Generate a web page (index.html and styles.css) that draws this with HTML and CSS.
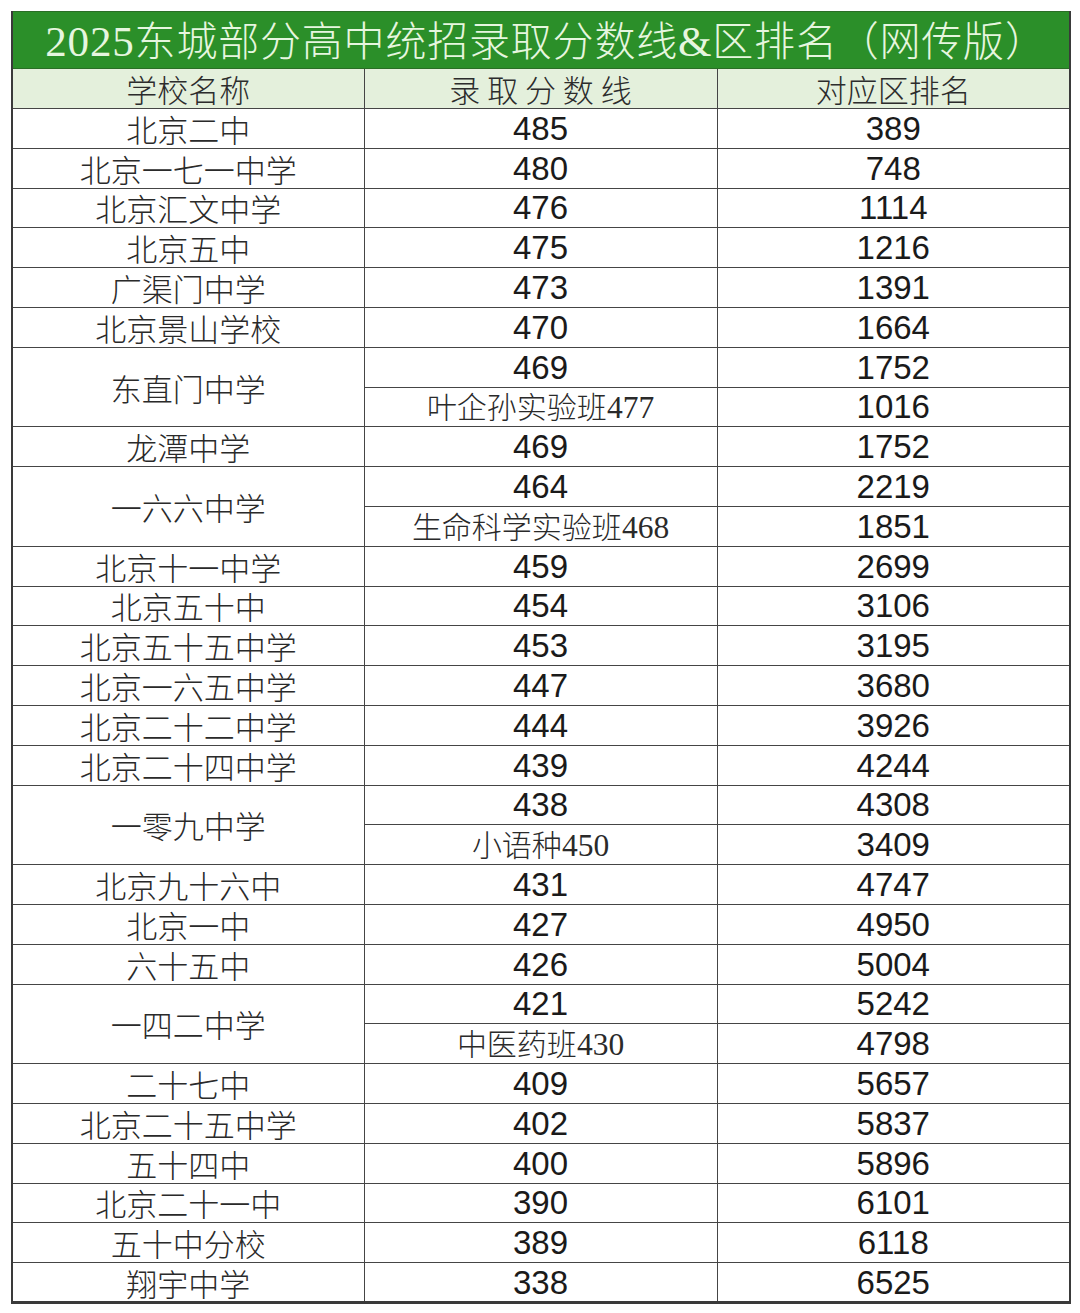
FILE: index.html
```html
<!DOCTYPE html>
<html lang="zh-CN">
<head>
<meta charset="utf-8">
<title>2025东城部分高中统招录取分数线&区排名</title>
<link rel="stylesheet" href="styles.css">
</head>
<body>
<div class="sheet">
<table class="scores">
<colgroup><col class="c1"><col class="c2"><col class="c3"></colgroup>
<thead>
<tr class="title-row"><th colspan="3" class="title"><span class="d">2025</span>东城部分高中统招录取分数线<span class="d">&amp;</span>区排名（网传版）</th></tr>
<tr class="head-row"><th class="hd">学校名称</th><th class="hd">录 取 分 数 线</th><th class="hd">对应区排名</th></tr>
</thead>
<tbody>
<tr><td class="nm">北京二中</td><td class="num">485</td><td class="num">389</td></tr>
<tr><td class="nm">北京一七一中学</td><td class="num">480</td><td class="num">748</td></tr>
<tr><td class="nm">北京汇文中学</td><td class="num">476</td><td class="num">1114</td></tr>
<tr><td class="nm">北京五中</td><td class="num">475</td><td class="num">1216</td></tr>
<tr><td class="nm">广渠门中学</td><td class="num">473</td><td class="num">1391</td></tr>
<tr><td class="nm">北京景山学校</td><td class="num">470</td><td class="num">1664</td></tr>
<tr><td class="nm" rowspan="2">东直门中学</td><td class="num">469</td><td class="num">1752</td></tr>
<tr><td class="sub">叶企孙实验班<span class="d">477</span></td><td class="num">1016</td></tr>
<tr><td class="nm">龙潭中学</td><td class="num">469</td><td class="num">1752</td></tr>
<tr><td class="nm" rowspan="2">一六六中学</td><td class="num">464</td><td class="num">2219</td></tr>
<tr><td class="sub">生命科学实验班<span class="d">468</span></td><td class="num">1851</td></tr>
<tr><td class="nm">北京十一中学</td><td class="num">459</td><td class="num">2699</td></tr>
<tr><td class="nm">北京五十中</td><td class="num">454</td><td class="num">3106</td></tr>
<tr><td class="nm">北京五十五中学</td><td class="num">453</td><td class="num">3195</td></tr>
<tr><td class="nm">北京一六五中学</td><td class="num">447</td><td class="num">3680</td></tr>
<tr><td class="nm">北京二十二中学</td><td class="num">444</td><td class="num">3926</td></tr>
<tr><td class="nm">北京二十四中学</td><td class="num">439</td><td class="num">4244</td></tr>
<tr><td class="nm" rowspan="2">一零九中学</td><td class="num">438</td><td class="num">4308</td></tr>
<tr><td class="sub">小语种<span class="d">450</span></td><td class="num">3409</td></tr>
<tr><td class="nm">北京九十六中</td><td class="num">431</td><td class="num">4747</td></tr>
<tr><td class="nm">北京一中</td><td class="num">427</td><td class="num">4950</td></tr>
<tr><td class="nm">六十五中</td><td class="num">426</td><td class="num">5004</td></tr>
<tr><td class="nm" rowspan="2">一四二中学</td><td class="num">421</td><td class="num">5242</td></tr>
<tr><td class="sub">中医药班<span class="d">430</span></td><td class="num">4798</td></tr>
<tr><td class="nm">二十七中</td><td class="num">409</td><td class="num">5657</td></tr>
<tr><td class="nm">北京二十五中学</td><td class="num">402</td><td class="num">5837</td></tr>
<tr><td class="nm">五十四中</td><td class="num">400</td><td class="num">5896</td></tr>
<tr><td class="nm">北京二十一中</td><td class="num">390</td><td class="num">6101</td></tr>
<tr><td class="nm">五十中分校</td><td class="num">389</td><td class="num">6118</td></tr>
<tr><td class="nm">翔宇中学</td><td class="num">338</td><td class="num">6525</td></tr>
</tbody>
</table>
</div>
</body>
</html>
```

FILE: styles.css
```css
html, body {
  margin: 0;
  padding: 0;
  background: #ffffff;
}

.sheet {
  padding: 11px 11px 0 11px;
}

.scores {
  width: 1058px;
  border-collapse: collapse;
  table-layout: fixed;
  border-left: 2px solid #3a3a3a;
  border-right: 2px solid #3a3a3a;
  border-bottom: 3px solid #3a3a3a;
}

.c1 { width: 352px; }
.c2 { width: 353px; }
.c3 { width: 353px; }

.scores th,
.scores td {
  padding: 0;
  text-align: center;
  vertical-align: middle;
  border: 1.5px solid #454545;
  line-height: 1;
  white-space: nowrap;
}

.title-row { height: 57px; }

.scores .title {
  background: #2b8f29;
  border: 1.5px solid #2a6e26;
  color: #e6f6df;
  font-family: "Noto Sans CJK SC", sans-serif;
  font-weight: 300;
  font-size: 41px;
  letter-spacing: 0.8px;
  padding: 2px 0 0 10px;
}

.head-row { height: 40px; }

.hd {
  background: #e4f0dc;
  color: #2c2c2c;
  font-family: "Noto Sans CJK SC", sans-serif;
  font-weight: 300;
  font-size: 31px;
}

tbody tr { height: 39.8px; }

.nm,
.sub {
  color: #2a2a2a;
  font-family: "Noto Sans CJK SC", sans-serif;
  font-weight: 300;
  font-size: 31px;
}

.scores .sub {
  font-size: 30px;
}

.d {
  font-family: "Liberation Serif", "DejaVu Serif", serif;
  font-weight: 400;
  font-size: 1.05em;
}

.num {
  color: #1a1a1a;
  font-family: "Liberation Sans", Arial, sans-serif;
  font-size: 33px;
}
```
